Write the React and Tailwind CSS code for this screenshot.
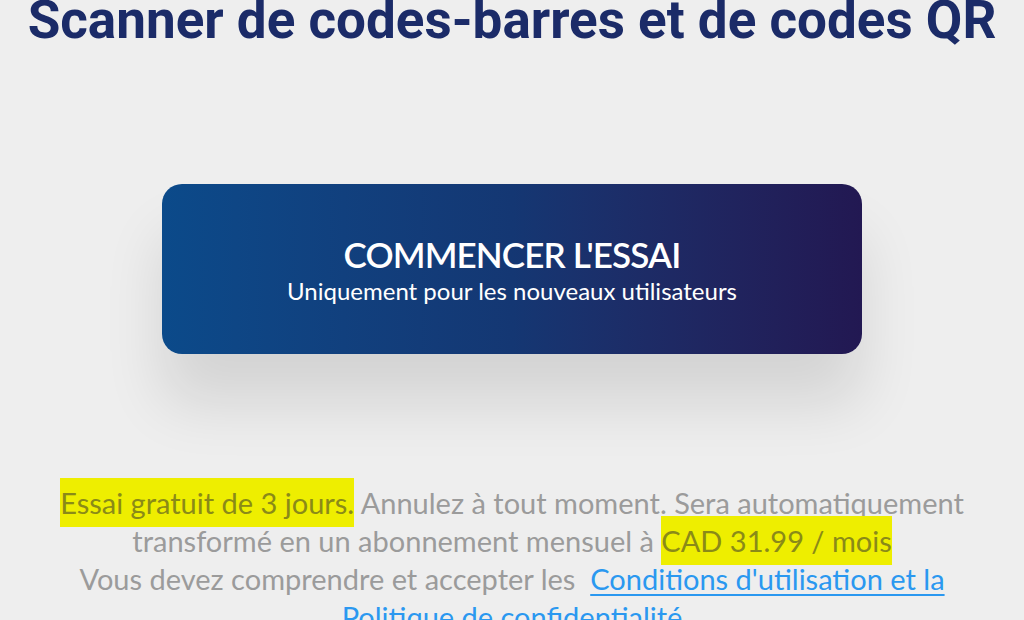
import React from "react";

export default function App() {
  return (
    <div className="h-[620px] w-[1024px] overflow-hidden bg-[#eeeeee] flex flex-col items-center">
      {/* Title */}
      <h1
        className="shrink-0 mt-[-12px] text-[53px] leading-[64px] font-bold text-[#1b2b68] whitespace-nowrap"
        style={{ fontFamily: "Roboto, sans-serif" }}
      >
        Scanner de codes-barres et de codes QR
      </h1>

      {/* Trial button */}
      <button
        className="shrink-0 mt-[132px] w-[700px] h-[170px] rounded-[20px] bg-gradient-to-r from-[#0b4a8a] via-[#143773] to-[#221852] shadow-[0_50px_60px_rgba(0,0,0,0.11)] flex flex-col items-center justify-center text-white"
        style={{ fontFamily: "Lato, sans-serif" }}
      >
        <span className="text-[35px] leading-[42px] font-semibold tracking-tight">
          COMMENCER L'ESSAI
        </span>
        <span className="mt-[2px] text-[24px] leading-[28px]">
          Uniquement pour les nouveaux utilisateurs
        </span>
      </button>

      {/* Legal text */}
      <p
        className="shrink-0 mt-[130px] px-[40px] text-center text-[29px] leading-[38px] text-[#9b9b9b]"
        style={{ fontFamily: "Lato, sans-serif" }}
      >
        <span className="bg-[#eeee00] text-[#8a8a18] py-[7px]">Essai gratuit de 3 jours.</span>{" "}
        Annulez à tout moment. Sera automatiquement transformé en un abonnement mensuel à{" "}
        <span className="bg-[#eeee00] text-[#8a8a18] py-[7px]">CAD 31.99 / mois</span>
        <br />
        Vous devez comprendre et accepter les{"\u00a0 "}
        <a className="text-[#2a98f0] underline underline-offset-4" href="#">
          Conditions d'utilisation et la Politique de confidentialité
        </a>
      </p>
    </div>
  );
}
